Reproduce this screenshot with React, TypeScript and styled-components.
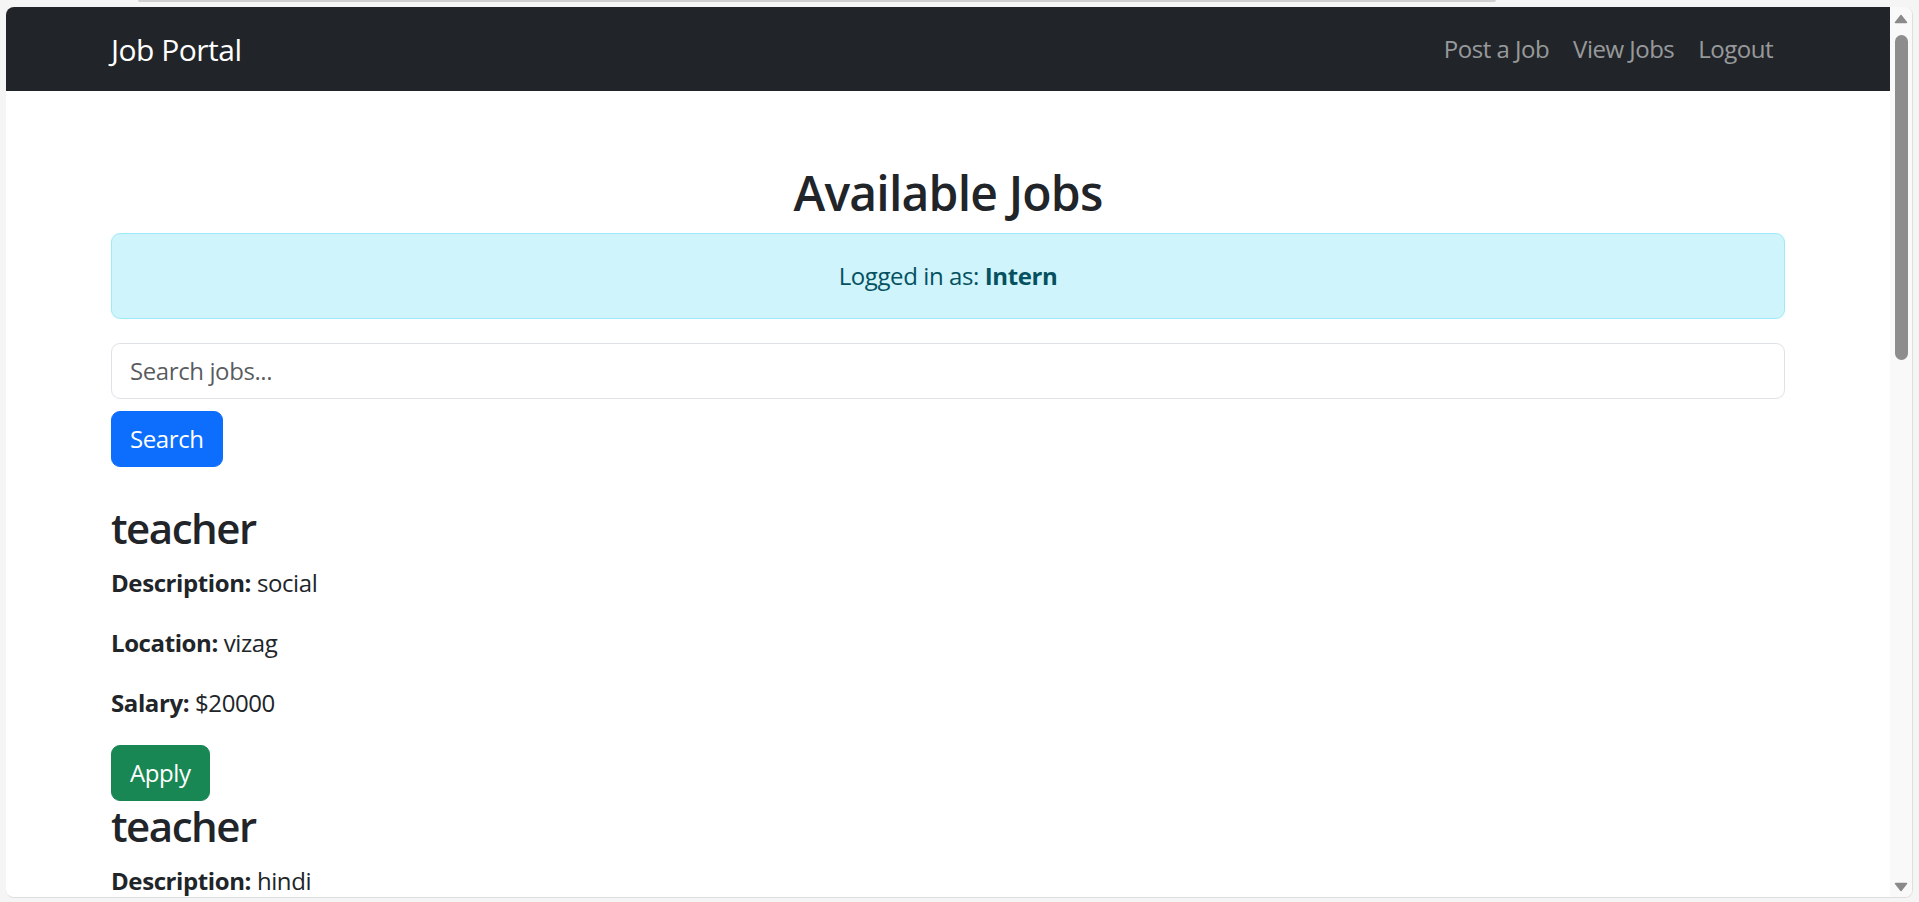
import React from "react";
import styled, { createGlobalStyle } from "styled-components";

const Global = createGlobalStyle`
  html, body { margin: 0; padding: 0; }
  body {
    background: #f5f5f5;
    overflow: hidden;
    font-family: "Open Sans", "Noto Sans", sans-serif;
    color: #212529;
  }
  * { box-sizing: border-box; }
`;

const Screen = styled.div`
  height: 902px;
  display: flex;
  flex-direction: column;
  padding: 0 6px 4px 6px;
`;

const TopLine = styled.div`
  height: 2px;
  width: 1358px;
  margin-left: 132px;
  margin-bottom: 5px;
  background: #cfcfcf;
  border-radius: 0 0 2px 2px;
`;

const Window = styled.div`
  flex: 1;
  min-height: 0;
  display: flex;
  background: #fff;
  border: 1px solid #dedede;
  border-top: none;
  border-left: none;
  border-radius: 8px;
  overflow: hidden;
`;

const Page = styled.div`
  flex: 1;
  min-width: 0;
  overflow: hidden;
`;

const ScrollTrack = styled.div`
  width: 22px;
  background: #f9f9f9;
  display: flex;
  flex-direction: column;
  align-items: center;
`;

const Thumb = styled.div`
  width: 13px;
  height: 325px;
  margin-top: 11px;
  border-radius: 7px;
  background: #8d8d8d;
`;

const Spacer = styled.div`
  flex: 1;
`;

const Arrow = styled.svg<{ $down?: boolean }>`
  display: block;
  width: 14px;
  height: 10px;
  margin-top: ${(p) => (p.$down ? "0" : "7px")};
  margin-bottom: ${(p) => (p.$down ? "5px" : "0")};
  transform: ${(p) => (p.$down ? "rotate(180deg)" : "none")};
`;

const Navbar = styled.nav`
  background: #212529;
  padding: 12px 0;
`;

const Container = styled.div`
  width: 1674px;
  margin: 0 auto;
`;

const NavInner = styled(Container)`
  display: flex;
  align-items: center;
  justify-content: space-between;
`;

const Brand = styled.a`
  color: #fff;
  font-size: 30px;
  line-height: 45px;
  padding: 7.5px 0;
  letter-spacing: -0.5px;
  text-decoration: none;
`;

const NavLinks = styled.div`
  display: flex;
`;

const NavLink = styled.a`
  color: rgba(255, 255, 255, 0.55);
  font-size: 24px;
  line-height: 36px;
  padding: 12px 12px;
  letter-spacing: -0.5px;
  text-decoration: none;
`;

const Main = styled(Container)`
  margin-top: 72px;
`;

const Title = styled.h2`
  font-size: 48px;
  font-weight: 600;
  line-height: 1.2;
  letter-spacing: -0.8px;
  margin: 0 0 11px;
  padding-top: 1px;
  text-align: center;
`;

const Alert = styled.div`
  background: #cff4fc;
  border: 1px solid #9eeaf9;
  color: #055160;
  border-radius: 9px;
  padding: 24px;
  font-size: 24px;
  line-height: 36px;
  letter-spacing: -0.4px;
  text-align: center;
  margin-bottom: 24px;

  strong { font-weight: 700; }
`;

const SearchInput = styled.input`
  display: block;
  width: 100%;
  height: 56px;
  padding: 9px 18px;
  font-family: inherit;
  font-size: 24px;
  line-height: 36px;
  letter-spacing: -0.4px;
  color: #212529;
  border: 1px solid #dee2e6;
  border-radius: 9px;
  margin: 0 0 12px;
  outline: none;

  &::placeholder { color: rgba(33, 37, 41, 0.75); }
`;

const Button = styled.button<{ $variant: "primary" | "success" }>`
  display: block;
  font-family: inherit;
  font-size: 24px;
  line-height: 36px;
  letter-spacing: -0.4px;
  padding: 9px 18px;
  height: 56px;
  color: #fff;
  background: ${(p) => (p.$variant === "primary" ? "#0d6efd" : "#198754")};
  border: 1px solid ${(p) => (p.$variant === "primary" ? "#0d6efd" : "#198754")};
  border-radius: 9px;
  cursor: pointer;
`;

const JobList = styled.div`
  margin-top: 36px;
`;

const JobTitle = styled.h3`
  font-size: 42px;
  font-weight: 600;
  line-height: 1.2;
  letter-spacing: -1.5px;
  margin: 0 0 12px;
`;

const Field = styled.p`
  font-size: 24px;
  line-height: 36px;
  letter-spacing: -0.4px;
  margin: 0 0 24px;

  strong { font-weight: 700; }
`;

const jobs = [
  { title: "teacher", description: "social", location: "vizag", salary: "20000" },
  { title: "teacher", description: "hindi", location: "vizag", salary: "20000" },
];

const ArrowIcon = ({ down }: { down?: boolean }) => (
  <Arrow $down={down} viewBox="0 0 14 10">
    <path d="M7 1.5 L12.5 8.5 L1.5 8.5 Z" fill="#8a8a8a" stroke="#8a8a8a" strokeWidth="1.5" strokeLinejoin="round" />
  </Arrow>
);

export default function App() {
  return (
    <>
      <Global />
      <Screen>
        <TopLine />
        <Window>
          <Page>
            <Navbar>
              <NavInner>
                <Brand href="#">Job Portal</Brand>
                <NavLinks>
                  <NavLink href="#">Post a Job</NavLink>
                  <NavLink href="#">View Jobs</NavLink>
                  <NavLink href="#">Logout</NavLink>
                </NavLinks>
              </NavInner>
            </Navbar>
            <Main>
              <Title>Available Jobs</Title>
              <Alert>
                Logged in as: <strong>Intern</strong>
              </Alert>
              <SearchInput placeholder="Search jobs..." />
              <Button $variant="primary">Search</Button>
              <JobList>
                {jobs.map((job, i) => (
                  <div key={i}>
                    <JobTitle>{job.title}</JobTitle>
                    <Field>
                      <strong>Description:</strong> {job.description}
                    </Field>
                    <Field>
                      <strong>Location:</strong> {job.location}
                    </Field>
                    <Field>
                      <strong>Salary:</strong> ${job.salary}
                    </Field>
                    <Button $variant="success">Apply</Button>
                  </div>
                ))}
              </JobList>
            </Main>
          </Page>
          <ScrollTrack>
            <ArrowIcon />
            <Thumb />
            <Spacer />
            <ArrowIcon down />
          </ScrollTrack>
        </Window>
      </Screen>
    </>
  );
}
